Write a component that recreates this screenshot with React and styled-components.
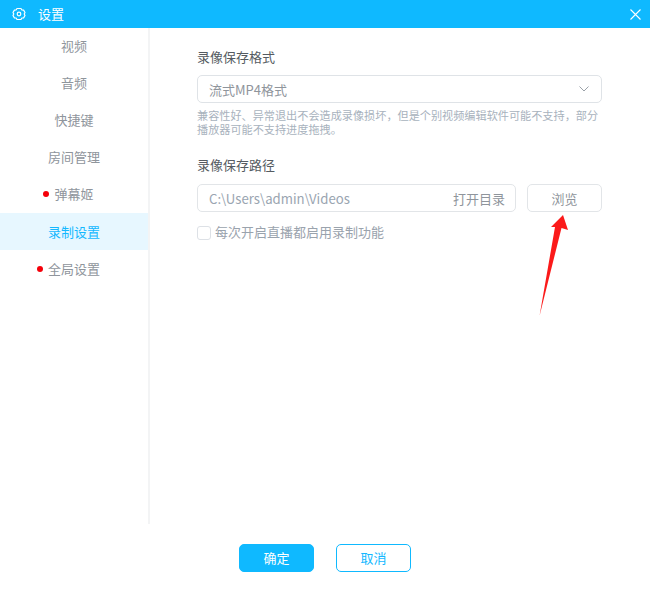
import React from 'react';
import styled, { createGlobalStyle } from 'styled-components';

const GlobalStyle = createGlobalStyle`
  html, body {
    margin: 0;
    padding: 0;
    background: #fff;
  }
  * {
    box-sizing: border-box;
  }
`;

const Window = styled.div`
  position: relative;
  width: 650px;
  height: 594px;
  background: #fff;
  overflow: hidden;
  display: flex;
  flex-direction: column;
  font-family: "Noto Sans CJK SC", "Open Sans", sans-serif;
`;

const TitleBar = styled.div`
  height: 28px;
  flex: none;
  background: #0fb9ff;
  display: flex;
  align-items: center;
  padding: 0 9px 0 12px;
  color: #fff;
  font-size: 13px;
`;

const TitleText = styled.span`
  margin: -2px 0 0 12px;
  flex: 1;
`;

const Body = styled.div`
  flex: none;
  height: 496px;
  display: flex;
`;

const Sidebar = styled.nav`
  width: 150px;
  flex: none;
  border-right: 2px solid #f3f4f5;
  display: flex;
  flex-direction: column;
`;

const NavItem = styled.div`
  height: 37px;
  padding-bottom: ${(p) => (p.$raised ? '2px' : '0')};
  display: flex;
  align-items: center;
  justify-content: center;
  font-size: 13px;
  color: ${(p) => (p.$active ? '#14b8ff' : '#8f959c')};
  background: ${(p) => (p.$active ? '#e7f7ff' : 'transparent')};
`;

const NavLabel = styled.span`
  position: relative;
`;

const Dot = styled.i`
  position: absolute;
  left: -11px;
  top: 50%;
  width: 6px;
  height: 6px;
  margin-top: -3px;
  border-radius: 50%;
  background: #f5000a;
`;

const Content = styled.main`
  flex: 1;
  padding: 19px 48px 0 47px;
  display: flex;
  flex-direction: column;
`;

const Label = styled.div`
  height: 20px;
  line-height: 20px;
  font-size: 13px;
  color: #555b61;
`;

const Field = styled.div`
  height: 28px;
  border: 1px solid #dfe3e7;
  border-radius: 5px;
  display: flex;
  align-items: center;
  background: #fff;
`;

const SelectBox = styled(Field)`
  margin-top: 8px;
  padding: 0 12px 0 11px;
  justify-content: space-between;
  font-size: 13px;
  color: #8f959c;
`;

const Hint = styled.p`
  margin: 5px 0 0;
  font-size: 11.15px;
  line-height: 14px;
  white-space: nowrap;
  color: #a8b2bd;
`;

const PathLabel = styled(Label)`
  margin-top: 19px;
`;

const PathRow = styled.div`
  margin-top: 9px;
  display: flex;
  gap: 11px;
`;

const PathInput = styled(Field)`
  flex: 1;
  padding: 0 10px 0 11px;
  justify-content: space-between;
  border-color: #e2e5e8;
`;

const PathText = styled.span`
  font-size: 13.2px;
  color: #9aa5b1;
`;

const OpenDir = styled.span`
  font-size: 13px;
  color: #8f959c;
`;

const BrowseButton = styled(Field)`
  width: 75px;
  flex: none;
  justify-content: center;
  font-size: 13px;
  color: #8f959c;
  border-color: #e2e5e8;
`;

const CheckRow = styled.label`
  margin-top: 12px;
  display: flex;
  align-items: center;
  gap: 4px;
  font-size: 13px;
  color: #9aa3ad;
`;

const CheckText = styled.span`
  margin-top: -2px;
`;

const CheckBox = styled.span`
  width: 14px;
  height: 14px;
  border: 1px solid #dde1e6;
  border-radius: 3px;
`;

const Footer = styled.footer`
  flex: 1;
  display: flex;
  justify-content: center;
  gap: 22px;
  padding-top: 20px;
`;

const DialogButton = styled.button`
  width: 75px;
  height: 28px;
  padding: 0 0 2px;
  border: 1px solid #0fb9ff;
  border-radius: 5px;
  font: inherit;
  font-size: 13px;
  color: ${(p) => (p.$primary ? '#fff' : '#14b8ff')};
  background: ${(p) => (p.$primary ? '#0fb9ff' : '#fff')};
`;

const Arrow = styled.svg`
  position: absolute;
  left: 530px;
  top: 210px;
`;

const SettingsGlyph = () => (
  <svg width="14" height="14" viewBox="0 0 14 14" fill="none" stroke="#fff" strokeWidth="1.2" strokeLinejoin="round">
    <path d="M5 1.500h4l.9 1.500 1.700.1 1.400 2.400-.8 1.500.8 1.500-1.400 2.400-1.700.1L9 12.500H5L4.100 11l-1.700-.1L1 8.500 1.800 7 1 5.500l1.400-2.400 1.700-.1z" />
    <circle cx="7" cy="7" r="1.800" />
  </svg>
);

const CloseGlyph = () => (
  <svg width="11" height="11" viewBox="0 0 11 11" stroke="#fff" strokeWidth="1.100">
    <path d="M.5.5l10 10M10.500.5l-10 10" />
  </svg>
);

const ChevronGlyph = () => (
  <svg width="10" height="6" viewBox="0 0 10 6" fill="none" stroke="#9aa1a8" strokeWidth="1">
    <path d="M.5.500 5 5 9.500.500" />
  </svg>
);

const navItems = [
  { name: '视频', raised: true },
  { name: '音频', raised: true },
  { name: '快捷键', raised: true },
  { name: '房间管理', raised: true },
  { name: '弹幕姬', raised: true, dot: true },
  { name: '录制设置', active: true },
  { name: '全局设置', dot: true },
];

export default function App() {
  return (
    <Window>
      <GlobalStyle />
      <TitleBar>
        <SettingsGlyph />
        <TitleText>设置</TitleText>
        <CloseGlyph />
      </TitleBar>
      <Body>
        <Sidebar>
          {navItems.map((item) => (
            <NavItem key={item.name} $active={item.active} $raised={item.raised}>
              <NavLabel>
                {item.dot && <Dot />}
                {item.name}
              </NavLabel>
            </NavItem>
          ))}
        </Sidebar>
        <Content>
          <Label>录像保存格式</Label>
          <SelectBox>
            <span>流式MP4格式</span>
            <ChevronGlyph />
          </SelectBox>
          <Hint>
            兼容性好、异常退出不会造成录像损坏，但是个别视频编辑软件可能不支持，部分
            <br />
            播放器可能不支持进度拖拽。
          </Hint>
          <PathLabel>录像保存路径</PathLabel>
          <PathRow>
            <PathInput>
              <PathText>C:\Users\admin\Videos</PathText>
              <OpenDir>打开目录</OpenDir>
            </PathInput>
            <BrowseButton>浏览</BrowseButton>
          </PathRow>
          <CheckRow>
            <CheckBox />
            <CheckText>每次开启直播都启用录制功能</CheckText>
          </CheckRow>
        </Content>
      </Body>
      <Footer>
        <DialogButton $primary>确定</DialogButton>
        <DialogButton>取消</DialogButton>
      </Footer>
      <Arrow width="40" height="110" viewBox="530 210 40 110">
        <path d="M563 215 L568 230 L561.500 228 L539.500 316 L555 227 L551 227 Z" fill="#fb1a1a" />
      </Arrow>
    </Window>
  );
}
